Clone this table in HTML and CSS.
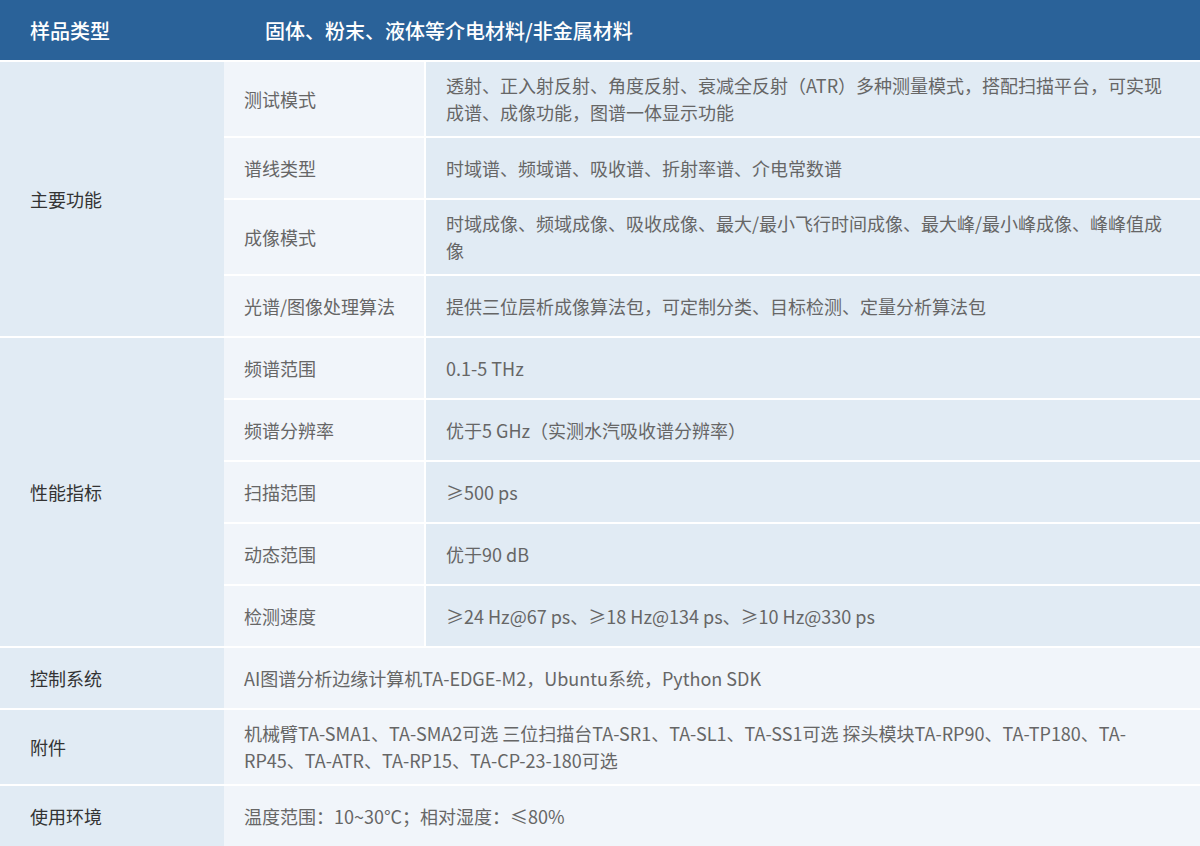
FILE: index.html
```html
<!DOCTYPE html>
<html lang="zh-CN">
<head>
<meta charset="utf-8">
<title>参数表</title>
<link rel="stylesheet" href="styles.css">
</head>
<body>
<div class="spec">
  <div class="hd hd-key">样品类型</div>
  <div class="hd hd-val">固体、粉末、液体等介电材料/非金属材料</div>

  <div class="grp r-main">主要功能</div>
  <div class="sub">测试模式</div>
  <div class="val">透射、正入射反射、角度反射、衰减全反射（ATR）多种测量模式，搭配扫描平台，可实现成谱、成像功能，图谱一体显示功能</div>
  <div class="sub">谱线类型</div>
  <div class="val">时域谱、频域谱、吸收谱、折射率谱、介电常数谱</div>
  <div class="sub">成像模式</div>
  <div class="val">时域成像、频域成像、吸收成像、最大/最小飞行时间成像、最大峰/最小峰成像、峰峰值成像</div>
  <div class="sub">光谱/图像处理算法</div>
  <div class="val">提供三位层析成像算法包，可定制分类、目标检测、定量分析算法包</div>

  <div class="grp r-perf">性能指标</div>
  <div class="sub">频谱范围</div>
  <div class="val">0.1-5 THz</div>
  <div class="sub">频谱分辨率</div>
  <div class="val">优于5 GHz（实测水汽吸收谱分辨率）</div>
  <div class="sub">扫描范围</div>
  <div class="val">≥500 ps</div>
  <div class="sub">动态范围</div>
  <div class="val">优于90 dB</div>
  <div class="sub">检测速度</div>
  <div class="val">≥24 Hz@67 ps、≥18 Hz@134 ps、≥10 Hz@330 ps</div>

  <div class="grp">控制系统</div>
  <div class="wide">AI图谱分析边缘计算机TA-EDGE-M2，Ubuntu系统，Python SDK</div>

  <div class="grp">附件</div>
  <div class="wide">机械臂TA-SMA1、TA-SMA2可选 三位扫描台TA-SR1、TA-SL1、TA-SS1可选 探头模块TA-RP90、TA-TP180、TA-RP45、TA-ATR、TA-RP15、TA-CP-23-180可选</div>

  <div class="grp">使用环境</div>
  <div class="wide">温度范围：10~30°C；相对湿度：≤80%</div>
</div>
</body>
</html>
```

FILE: styles.css
```css
html, body {
  margin: 0;
  padding: 0;
  background: #ffffff;
}

body {
  font-family: "Noto Sans CJK SC", "Noto Sans", sans-serif;
  font-size: 18px;
  line-height: 27px;
}

.spec {
  width: 1200px;
  display: grid;
  grid-template-columns: 224px 200px 1fr;
  grid-auto-rows: minmax(60px, auto);
  row-gap: 2px;
  background: #ffffff;
}

.hd {
  background: #2a6299;
  color: #ffffff;
  font-size: 20px;
  font-weight: 500;
  display: flex;
  align-items: center;
  height: 60px;
}

.hd-key {
  padding-left: 30px;
}

.hd-val {
  grid-column: 2 / 4;
  padding-left: 41px;
}

.grp {
  grid-column: 1;
  background: #e1ebf4;
  color: #333333;
  display: flex;
  align-items: center;
  padding: 10px 30px;
}

.r-main {
  grid-row: span 4;
}

.r-perf {
  grid-row: span 5;
}

.sub {
  grid-column: 2;
  background: #f1f5fa;
  color: #666666;
  display: flex;
  align-items: center;
  padding: 10px 20px;
}

.val {
  grid-column: 3;
  background: #e1ebf4;
  color: #666666;
  border-left: 2px solid #ffffff;
  display: flex;
  align-items: center;
  padding: 10px 36px 10px 20px;
}

.wide {
  grid-column: 2 / 4;
  background: #f1f5fa;
  color: #666666;
  display: flex;
  align-items: center;
  padding: 10px 60px 10px 20px;
}
```
